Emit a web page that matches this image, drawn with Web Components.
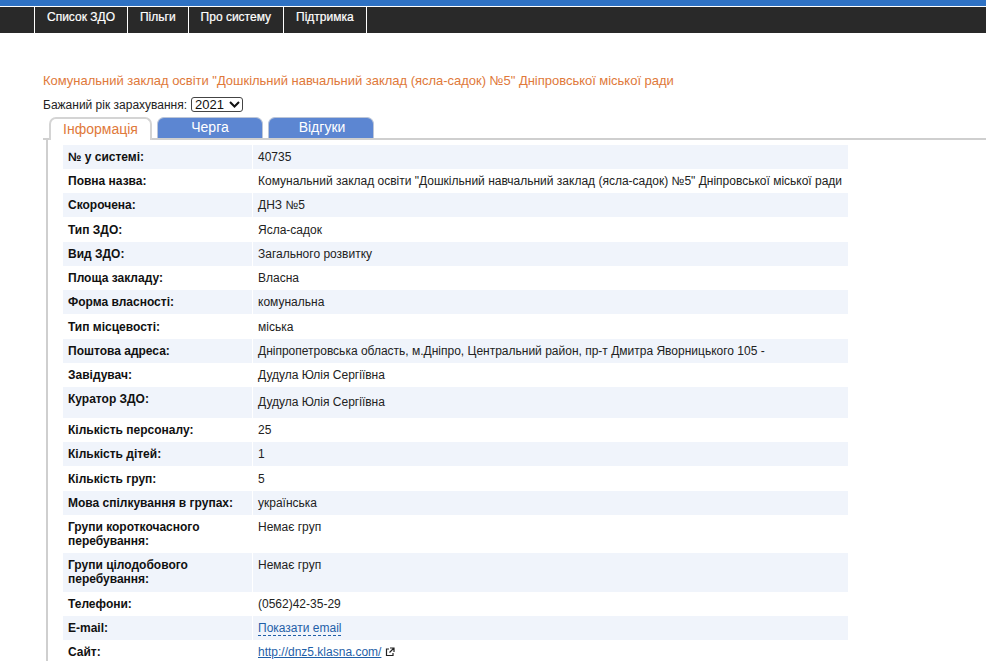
<!DOCTYPE html>
<html lang="uk">
<head>
<meta charset="utf-8">
<title>ЗДО</title>
<style>
  html, body { margin: 0; padding: 0; background: #fff; height: 661px; overflow: hidden; }
  body { font: 12px "Liberation Sans", Arial, sans-serif; color: #222; }
</style>
</head>
<body>
<top-nav>
  <nav-item>Список ЗДО</nav-item>
  <nav-item>Пільги</nav-item>
  <nav-item>Про систему</nav-item>
  <nav-item>Підтримка</nav-item>
</top-nav>
<school-page title-text='Комунальний заклад освіти "Дошкільний навчальний заклад (ясла-садок) №5" Дніпровської міської ради'>
  <tab-bar>
    <tab-item active>Інформація</tab-item>
    <tab-item>Черга</tab-item>
    <tab-item class="shift">Відгуки</tab-item>
  </tab-bar>
  <info-table>
    <info-row label="№ у системі:" h="24">40735</info-row>
    <info-row label="Повна назва:" h="24.2">Комунальний заклад освіти "Дошкільний навчальний заклад (ясла-садок) №5" Дніпровської міської ради</info-row>
    <info-row label="Скорочена:" h="24.2">ДНЗ №5</info-row>
    <info-row label="Тип ЗДО:" h="24.4">Ясла-садок</info-row>
    <info-row label="Вид ЗДО:" h="24.2">Загального розвитку</info-row>
    <info-row label="Площа закладу:" h="24.2">Власна</info-row>
    <info-row label="Форма власності:" h="24.2">комунальна</info-row>
    <info-row label="Тип місцевості:" h="24.4">міська</info-row>
    <info-row label="Поштова адреса:" h="24.2">Дніпропетровська область, м.Дніпро, Центральний район, пр-т Дмитра Яворницького 105 -</info-row>
    <info-row label="Завідувач:" h="24.2">Дудула Юлія Сергіївна</info-row>
    <info-row label="Куратор ЗДО:" h="31" align="top" center-value>Дудула Юлія Сергіївна</info-row>
    <info-row label="Кількість персоналу:" h="24.2">25</info-row>
    <info-row label="Кількість дітей:" h="24.2">1</info-row>
    <info-row label="Кількість груп:" h="24.4">5</info-row>
    <info-row label="Мова спілкування в групах:" h="24.2">українська</info-row>
    <info-row label="Групи короткочасного перебування:" h="38" align="top">Немає груп</info-row>
    <info-row label="Групи цілодобового перебування:" h="39" align="top">Немає груп</info-row>
    <info-row label="Телефони:" h="24.2">(0562)42-35-29</info-row>
    <info-row label="E-mail:" h="24">
      <a-link dashed>Показати email</a-link>
    </info-row>
    <info-row label="Сайт:" h="24">
      <a-link external>http://dnz5.klasna.com/</a-link>
    </info-row>
  </info-table>
</school-page>

<script>
class TopNav extends HTMLElement {
  constructor() {
    super();
    this.attachShadow({ mode: 'open' }).innerHTML = `
      <style>
        :host { display: block; border-top: 6px solid #2f72c4; }
        .bar { display: flex; height: 26px; margin-top: 1px; padding-left: 34px; background: #292929; }
      </style>
      <div class="bar"><slot></slot></div>`;
  }
}
class NavItem extends HTMLElement {
  constructor() {
    super();
    this.attachShadow({ mode: 'open' }).innerHTML = `
      <style>
        :host { display: block; margin-top: -1px; height: 27px; padding: 0 12px; color: #fff;
          font: 12px/22px "Liberation Sans", Arial, sans-serif; border-left: 1px solid #fff; -webkit-text-stroke: 0.2px #fff; }
        :host(:last-child) { border-right: 1px solid #fff; }
      </style>
      <slot></slot>`;
  }
}
class SchoolPage extends HTMLElement {
  constructor() {
    super();
    this.attachShadow({ mode: 'open' }).innerHTML = `
      <style>
        :host { display: block; padding: 40px 0 0 43px; }
        h1 { margin: 0; font: 13px/16px "Liberation Sans", Arial, sans-serif; color: #e0793a; letter-spacing: -0.02px; }
        .year { display: flex; align-items: center; gap: 4px; height: 19px; margin-top: 6px; color: #222; font-size: 12px; }
        .sel { display: inline-flex; align-items: center; gap: 5px; box-sizing: border-box; width: 52px; height: 15px;
          padding-left: 3px; border: 1px solid #444; border-radius: 3px; font-size: 13px; color: #111; }
        svg { display: block; }
      </style>
      <h1></h1>
      <div class="year">Бажаний рік зарахування:
        <span class="sel">2021
          <svg width="11" height="7" viewBox="0 0 11 7"><path d="M1 1l4.500 4.500L10 1" fill="none" stroke="#111" stroke-width="2"/></svg>
        </span>
      </div>
      <slot></slot>`;
    this.shadowRoot.querySelector('h1').textContent = this.getAttribute('title-text');
  }
}
class TabBar extends HTMLElement {
  constructor() {
    super();
    this.attachShadow({ mode: 'open' }).innerHTML = `
      <style>
        :host { display: flex; gap: 5px; height: 21px; margin-top: 3px; padding-left: 6px; border-bottom: 2px solid #cfcfcf; position: relative; z-index: 1; }
      </style>
      <slot></slot>`;
  }
}
class TabItem extends HTMLElement {
  constructor() {
    super();
    this.attachShadow({ mode: 'open' }).innerHTML = `
      <style>
        :host { display: block; box-sizing: border-box; width: 106px; height: 21px; text-align: center;
          font: 14px/19px "Liberation Sans", Arial, sans-serif; color: #fff; background: #5c86d2;
          border-radius: 7px 7px 0 0; border: 1px solid #bcc6d8; border-bottom: 0; }
        :host(.shift) { padding-left: 2px; }
        :host([active]) { width: 103px; height: 23px; color: #e0793a; background: #fff; border: 2px solid #d4d4d4; border-bottom: 0; line-height: 21px; }
      </style>
      <slot></slot>`;
  }
}
class InfoTable extends HTMLElement {
  constructor() {
    super();
    this.attachShadow({ mode: 'open' }).innerHTML = `
      <style>
        :host { display: block; width: 785px; margin-left: 3px; padding: 5px 0 0 15px; border-left: 2px solid #cfcfcf; }
      </style>
      <slot></slot>`;
  }
}
class InfoRow extends HTMLElement {
  constructor() {
    super();
    this.attachShadow({ mode: 'open' }).innerHTML = `
      <style>
        :host { display: grid; grid-template-columns: 189px 595px; column-gap: 1px; font-size: 12px; line-height: 14px; color: #222; }
        :host(:nth-child(odd)) .c { background: #f0f4fb; }
        .c { display: flex; align-items: center; box-sizing: border-box; padding: 0 5px; }
        .l { font-weight: bold; color: #111; }
        :host([align=top]) .c { align-items: flex-start; padding-top: 5px; }
        :host([center-value]) .l { padding-top: 5px; }
        :host([center-value]) .v { align-items: center; padding-top: 0; padding-bottom: 2px; }
        .v { white-space: nowrap; }
      </style>
      <div class="c l"></div><div class="c v"><slot></slot></div>`;
    this.shadowRoot.querySelector('.l').textContent = this.getAttribute('label');
    this.style.height = this.getAttribute('h') + 'px';
  }
}
class ALink extends HTMLElement {
  constructor() {
    super();
    this.attachShadow({ mode: 'open' }).innerHTML = `
      <style>
        :host { display: inline-flex; align-items: center; gap: 4px; color: #1f5fa8; }
        .t { text-decoration: underline; }
        :host([dashed]) .t { text-decoration: none; border-bottom: 1px dashed #1f5fa8; }
        svg { display: block; }
      </style>
      <span class="t"><slot></slot></span>`;
    if (this.hasAttribute('external')) {
      this.shadowRoot.innerHTML += `<svg width="10" height="10" viewBox="0 0 10 10"><path d="M4 2H1.500v6.500H8V6M5 1h4v4M9 1L4.500 5.500" fill="none" stroke="#222" stroke-width="1.200"/></svg>`;
    }
  }
}
customElements.define('top-nav', TopNav);
customElements.define('nav-item', NavItem);
customElements.define('school-page', SchoolPage);
customElements.define('tab-bar', TabBar);
customElements.define('tab-item', TabItem);
customElements.define('info-table', InfoTable);
customElements.define('info-row', InfoRow);
customElements.define('a-link', ALink);
</script>
</body>
</html>
